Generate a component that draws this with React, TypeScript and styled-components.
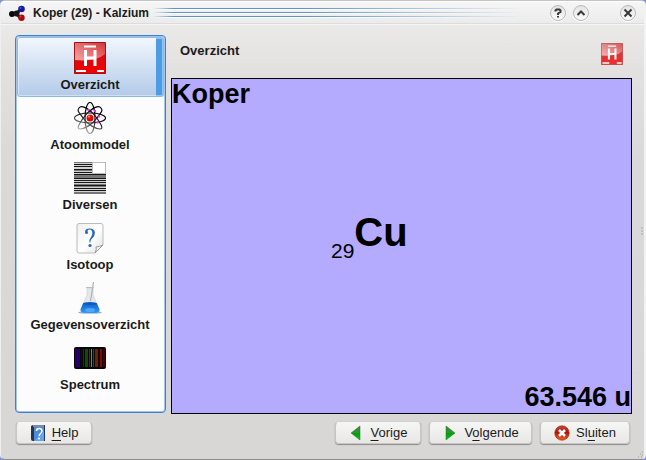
import React, { useState } from "react";
import styled, { createGlobalStyle, css } from "styled-components";

const GlobalStyle = createGlobalStyle`
  * { box-sizing: border-box; }
  body {
    margin: 0;
    background: #7f8fd8;
    font-family: "Liberation Sans", Arial, sans-serif;
    font-size: 13px;
    color: #1b1b1b;
  }
  button { font: inherit; color: inherit; cursor: default; }
`;

const Window = styled.div`
  position: relative;
  display: flex;
  flex-direction: column;
  min-height: 100vh;
  border: 1px solid #c4c4c4;
  border-left-color: #efefef;
  border-right: 2px solid #f2f2f2;
  border-bottom-color: #8e8e8e;
  border-radius: 5px;
  background: linear-gradient(#eeeeed 0, #e2e1e0 70px, #dad9d8 160px, #d8d7d6 100%);
`;

const TitleBar = styled.header`
  display: flex;
  align-items: center;
  height: 23px;
  padding: 0 8px;
  border-top: 1px solid #fff;
  border-bottom: 1px solid #dcdcdc;
  border-radius: 4px 4px 0 0;
  box-shadow: 0 1px #f6f6f6;
  background: linear-gradient(#f6f6f6, #ebebeb);
`;

const Title = styled.h1`
  margin: 0 4px 0 8px;
  font-size: 12px;
  line-height: 16px;
`;

const Grip = styled.div`
  flex: 1;
  height: 10px;
  margin-right: 8px;
  background: repeating-linear-gradient(#5e94cc 0 1px, #fff 1px 2px, transparent 2px 4px);
  mask-image: linear-gradient(90deg, transparent, #000 20px, #000 40%, transparent 97%);
`;

const WindowButton = styled.button<{ $apart?: boolean }>`
  display: grid;
  place-items: center;
  width: 16px;
  height: 16px;
  margin-left: ${(p) => (p.$apart ? 31 : 7)}px;
  padding: 0;
  border: 1px solid #b9b9b9;
  border-radius: 50%;
  background: linear-gradient(#e4e4e4, #fafafa);
  box-shadow: 0 1px #fff;
`;

const Body = styled.div`
  display: flex;
  flex: 1;
  gap: 5px;
  padding: 11px 12px 0 14px;
`;

const Sidebar = styled.nav`
  flex: 0 0 151px;
  margin-bottom: 1px;
  padding: 1px;
  border: 1px solid #3f80cc;
  border-radius: 4px;
  background: #fcfcfc;
  box-shadow: inset 0 0 0 1px #a4c5eb;
`;

const Item = styled.button<{ $active: boolean }>`
  display: flex;
  flex-direction: column;
  align-items: center;
  gap: 3px;
  width: 100%;
  height: 60px;
  padding: 5px 1px 0 0;
  border: 0;
  border-radius: 3px;
  background: none;
  font-weight: bold;
  line-height: 15px;
  ${(p) =>
    p.$active &&
    css`
      background: linear-gradient(90deg, transparent 139px, #4c9be6 139px),
        linear-gradient(#f2f7fd, #b2cae9);
      box-shadow: inset 0 0 0 1px #8fb8e6, inset 0 0 0 2px #ffffff66;
    `}
`;

const Detail = styled.main`
  display: flex;
  flex: 1;
  flex-direction: column;
  min-width: 0;
`;

const DetailHeader = styled.div`
  display: flex;
  justify-content: space-between;
  height: 43px;
  padding: 8px 9px 0;
`;

const Heading = styled.h2`
  margin: 0;
  font-size: 13px;
  line-height: 15px;
`;

const Faded = styled.span`
  opacity: 0.8;
`;

const ElementCard = styled.section`
  display: flex;
  flex: 1;
  flex-direction: column;
  justify-content: space-between;
  border: 1px solid #000;
  background: #b4abff;
  color: #000;
  font-size: 27px;
  font-weight: bold;
  line-height: 31px;
`;

const Symbol = styled.div`
  display: flex;
  align-items: flex-end;
  padding: 0 0 29px 159px;
  font-size: 40px;
  line-height: 46px;
`;

const AtomicNumber = styled.sub`
  margin-bottom: -8px;
  font-size: 21px;
  font-weight: normal;
  line-height: 24px;
`;

const Mass = styled.div`
  text-align: right;
`;

const Footer = styled.footer`
  display: flex;
  gap: 8px;
  padding: 8px 14px 15px 15px;
`;

const PushButton = styled.button<{ $width: number; $first?: boolean }>`
  display: flex;
  align-items: center;
  justify-content: center;
  gap: 6px;
  width: ${(p) => p.$width}px;
  height: 22px;
  margin-right: ${(p) => (p.$first ? "auto" : "0")};
  padding: 0;
  border: 1px solid #c6c5c4;
  border-top-color: #f4f4f4;
  border-radius: 4px;
  background: linear-gradient(#f5f5f4, #e8e7e6);
  box-shadow: 0 1px 1px #8b8b8b, 0 0 1px #999;
  line-height: 16px;
  u { text-underline-offset: 3px; text-decoration-thickness: 1px; }
`;

const SideGrip = styled.svg`
  position: absolute;
  top: 226px;
  right: 0;
`;

const CornerGrip = styled.svg`
  position: absolute;
  right: 0;
  bottom: 1px;
`;

const Hydrogen = ({ size = 32 }: { size?: number }) => (
  <svg width={size} height={size} viewBox="0 0 32 32">
    <defs>
      <linearGradient id="red" x1="0" y1="0" x2="0" y2="1">
        <stop offset="0" stopColor="#c5161b" />
        <stop offset="1" stopColor="#f30000" />
      </linearGradient>
      <linearGradient id="shine" x1="1" y1="0" x2="0" y2="1">
        <stop offset="0" stopColor="#fff" stopOpacity=".15" />
        <stop offset="1" stopColor="#fff" stopOpacity=".65" />
      </linearGradient>
    </defs>
    <path d="M.5.5h31v31H.5z" fill="url(#red)" stroke="#a90f13" />
    <path d="M1 1h30v11Q22 20 1 18z" fill="url(#shine)" />
    <path d="M11.500 8v16M21 8v16M11 16h10" stroke="#fff" strokeWidth="3" />
    <path d="M10 4.500h12M2 29h10M23 29h7" stroke="#fff" strokeWidth="2" />
  </svg>
);

const Atom = () => (
  <svg width="32" height="32" viewBox="0 0 32 32">
    <defs>
      <linearGradient id="orbit" x1="24" y1="2" x2="10" y2="32" gradientUnits="userSpaceOnUse">
        <stop offset=".2" stopColor="#000" />
        <stop offset=".55" stopColor="#222" />
        <stop offset="1" stopColor="#ccc" />
      </linearGradient>
      <radialGradient id="core" cx=".35" cy=".3">
        <stop offset="0" stopColor="#ffc0b0" />
        <stop offset=".4" stopColor="#f31810" />
        <stop offset="1" stopColor="#e00000" />
      </radialGradient>
    </defs>
    <g fill="none" stroke="url(#orbit)" strokeWidth="1.200">
      <ellipse cx="16" cy="16" rx="15.500" ry="5" />
      <ellipse cx="16" cy="16" rx="5" ry="15.500" />
      <path d="M5 6C8 2 17 8 22 15S30 27 26 27 14 23 9 16 3 9 5 6z" />
      <path d="M27 6C24 2 15 8 10 15S2 27 6 27s12-4 17-11 6-7 4-10z" />
    </g>
    <path d="M13.500 8h2M20 9h2M24 14.500h2M22.500 20.500h2" stroke="#f2f" strokeWidth="2" />
    <circle cx="16" cy="16" r="3.500" fill="url(#core)" />
  </svg>
);

const Stripes = () => (
  <svg width="32" height="32" viewBox="0 0 32 32">
    <path d="M0 0h32v32H0z" fill="#d2d2d2" />
    <path
      d="M0 2.500h32M0 4.500h32M0 7.500h32M0 10.500h32M0 12.500h32M0 16.500h32M0 18.500h32M0 20.500h32M0 23.500h32M0 26.500h32M0 28.500h32"
      stroke="#181818"
    />
    <path d="M0 .5h32M0 8.500h32M0 13.500h32M0 14.500h32M0 15.500h32M0 22.500h32M0 24.500h32M0 30.500h32M0 31.500h32" stroke="#777" />
    <path d="M18.500.5h13v11h-13z" fill="#fff" stroke="#bbb" />
  </svg>
);

const Page = () => (
  <svg width="32" height="32" viewBox="0 0 32 32">
    <defs>
      <linearGradient id="paper" x1="0" y1="0" x2="1" y2="1">
        <stop offset="0" stopColor="#eee" />
        <stop offset=".55" stopColor="#fff" />
        <stop offset="1" stopColor="#ddd" />
      </linearGradient>
    </defs>
    <path d="M5 1.500h22q2 0 2 2V23l-8 8H5q-2 0-2-2V3.500q0-2 2-2z" fill="url(#paper)" stroke="#bbb" />
    <path d="M21 31q2-4 1-6 3 0 7-2z" fill="#f8f8f8" stroke="#999" />
    <path d="M11 10q0-3.500 4.500-3.500c7 0 6 6.500 3.500 9q-2.500 2-2.700 5h-.8q-.5-3 1.500-5.500c2-2.500 2-7.500-1.500-7.500q-2 0-2 2z" fill="#2868b8" />
    <circle cx="12.500" cy="10.500" r="1.500" fill="#2868b8" />
    <circle cx="16" cy="23.500" r="1.600" fill="#2868b8" />
  </svg>
);

const Flask = () => (
  <svg width="32" height="32" viewBox="0 0 32 32">
    <defs>
      <linearGradient id="fluid" x1="0" y1="0" x2="0" y2="1">
        <stop offset="0" stopColor="#1462c9" />
        <stop offset="1" stopColor="#2c9bff" />
      </linearGradient>
    </defs>
    <ellipse cx="16" cy="30.500" rx="12" ry="1.300" fill="#aaa" />
    <path d="M13 6h6v7l6 14q0 4-3 4H10q-3 0-3-4l6-14z" fill="#e4e8ea" stroke="#d0d4d7" strokeWidth=".8" />
    <path d="M9 21.500h14l2.500 6q0 3.500-3.500 3.500H10q-3.500 0-3.500-3.500z" fill="url(#fluid)" />
    <ellipse cx="16" cy="21.500" rx="7" ry="1.500" fill="#0c58c4" />
    <path d="M19.500 0l-3 19" stroke="#a9b0b7" strokeWidth="1.200" />
    <path d="M12 5.500h8" stroke="#bbb" />
    <ellipse cx="16" cy="28" rx="5" ry="2" fill="#68bdff" opacity=".6" />
  </svg>
);

const spectrumLines: [number, number, string][] = [
  [1, 5, "#25006d"],
  [7, 1, "#1b0038"],
  [9, 1, "#073b3b"],
  [11, 3, "#124a08"],
  [15, 1, "#204800"],
  [17, 1, "#829500"],
  [19, 1, "#414600"],
  [21, 1, "#533000"],
  [22, 2, "#652600"],
  [26, 2, "#920008"],
  [29, 2, "#480006"],
];

const Spectrum = () => (
  <svg width="32" height="32" viewBox="0 0 32 32">
    <rect y="5" width="32" height="22" rx="2" fill="#070707" />
    {spectrumLines.map(([x, width, fill]) => (
      <rect key={x} x={x} y="7" width={width} height="18" fill={fill} />
    ))}
  </svg>
);

const Molecule = () => (
  <svg width="16" height="16" viewBox="0 0 16 16">
    <path d="M3 8.500h4l5-4M7 8.500l5 5" stroke="#222" strokeWidth="3" fill="none" />
    <circle cx="3" cy="9" r="3" fill="#080808" />
    <circle cx="7.500" cy="8.500" r="3" fill="#151515" />
    <circle cx="12.500" cy="4" r="3.300" fill="#19199d" />
    <circle cx="12.500" cy="12.700" r="3.200" fill="#a90912" />
    <circle cx="11.500" cy="3" r="1" fill="#5252cf" />
    <circle cx="11.500" cy="11.500" r="1" fill="#e23b42" />
  </svg>
);

const Book = () => (
  <svg width="16" height="16" viewBox="0 0 16 16">
    <path d="M1 1q1-1 3-1h11v16H3q-2 0-2-2z" fill="#26364f" />
    <path d="M4 2h10v14H4z" fill="#4b8cdc" />
    <path d="M3 1h11" stroke="#ddd" />
    <path d="M4 16L14 6v10z" fill="#76b2f4" opacity=".6" />
    <path d="M6.500 6q0-2.500 2.500-2.500 3 0 3 2.500 0 1.500-2 3-.8.600-.8 2" fill="none" stroke="#fff" strokeWidth="1.500" />
    <circle cx="9" cy="13.500" r="1" fill="#fff" />
  </svg>
);

const Arrow = ({ d }: { d: string }) => (
  <svg width="16" height="16" viewBox="0 0 16 16">
    <defs>
      <linearGradient id="green" x1="0" y1="0" x2="0" y2="1">
        <stop offset="0" stopColor="#3b8540" />
        <stop offset=".48" stopColor="#339039" />
        <stop offset=".52" stopColor="#00a000" />
        <stop offset="1" stopColor="#00c51a" />
      </linearGradient>
    </defs>
    <path d={d} fill="url(#green)" stroke="#197827" strokeWidth=".5" />
  </svg>
);

const Stop = () => (
  <svg width="16" height="16" viewBox="0 0 16 16">
    <defs>
      <linearGradient id="stop" x1="0" y1="0" x2="0" y2="1">
        <stop offset="0" stopColor="#c44b3a" />
        <stop offset=".45" stopColor="#ad1405" />
        <stop offset="1" stopColor="#f26420" />
      </linearGradient>
    </defs>
    <circle cx="8" cy="8" r="7.200" fill="url(#stop)" stroke="#a6210e" strokeWidth=".7" />
    <path d="M5 5l6 6M11 5l-6 6" stroke="#fff" strokeWidth="2.600" />
  </svg>
);

const sections = [
  { name: "Overzicht", icon: <Hydrogen /> },
  { name: "Atoommodel", icon: <Atom /> },
  { name: "Diversen", icon: <Stripes /> },
  { name: "Isotoop", icon: <Page /> },
  { name: "Gegevensoverzicht", icon: <Flask /> },
  { name: "Spectrum", icon: <Spectrum /> },
];

const Glyph = ({ d }: { d: string }) => (
  <svg width="10" height="10" viewBox="0 0 10 10">
    <path d={d} fill="none" stroke="#383838" strokeWidth="2" />
  </svg>
);

export default function App() {
  const [active, setActive] = useState("Overzicht");

  return (
    <>
      <GlobalStyle />
      <Window>
        <TitleBar>
          <Molecule />
          <Title>Koper (29) - Kalzium</Title>
          <Grip />
          <WindowButton aria-label="Help">
            <Glyph d="M2.500 3.500V2.500L3.500 1.500h3l1 1v1.500L5 5.500V7M5 8v1.500" />
          </WindowButton>
          <WindowButton aria-label="Oprollen">
            <Glyph d="M1.500 7L5 3.500 8.500 7" />
          </WindowButton>
          <WindowButton aria-label="Venster sluiten" $apart>
            <Glyph d="M1.500 1.500l7 7M8.500 1.500l-7 7" />
          </WindowButton>
        </TitleBar>
        <Body>
          <Sidebar>
            {sections.map(({ name, icon }) => (
              <Item key={name} $active={name === active} onClick={() => setActive(name)}>
                {icon}
                {name}
              </Item>
            ))}
          </Sidebar>
          <Detail>
            <DetailHeader>
              <Heading>{active}</Heading>
              <Faded>
                <Hydrogen size={22} />
              </Faded>
            </DetailHeader>
            <ElementCard>
              <div>Koper</div>
              <Symbol>
                <AtomicNumber>29</AtomicNumber>Cu
              </Symbol>
              <Mass>63.546 u</Mass>
            </ElementCard>
          </Detail>
        </Body>
        <Footer>
          <PushButton $width={76} $first>
            <Book />
            <span><u>H</u>elp</span>
          </PushButton>
          <PushButton $width={86}>
            <Arrow d="M11 1v14L2 8z" />
            <span><u>V</u>orige</span>
          </PushButton>
          <PushButton $width={103}>
            <Arrow d="M4 1v14l9-7z" />
            <span>V<u>o</u>lgende</span>
          </PushButton>
          <PushButton $width={90}>
            <Stop />
            <span>Sl<u>u</u>iten</span>
          </PushButton>
        </Footer>
        <SideGrip width="3" height="9">
          <path d="M0 1h2M0 4h2M0 7h2" stroke="#aaa" />
        </SideGrip>
        <CornerGrip width="7" height="7">
          <path d="M5 1h1M3 3h1M5 4h1M1 6h1M4 6h1" stroke="#999" />
        </CornerGrip>
      </Window>
    </>
  );
}
